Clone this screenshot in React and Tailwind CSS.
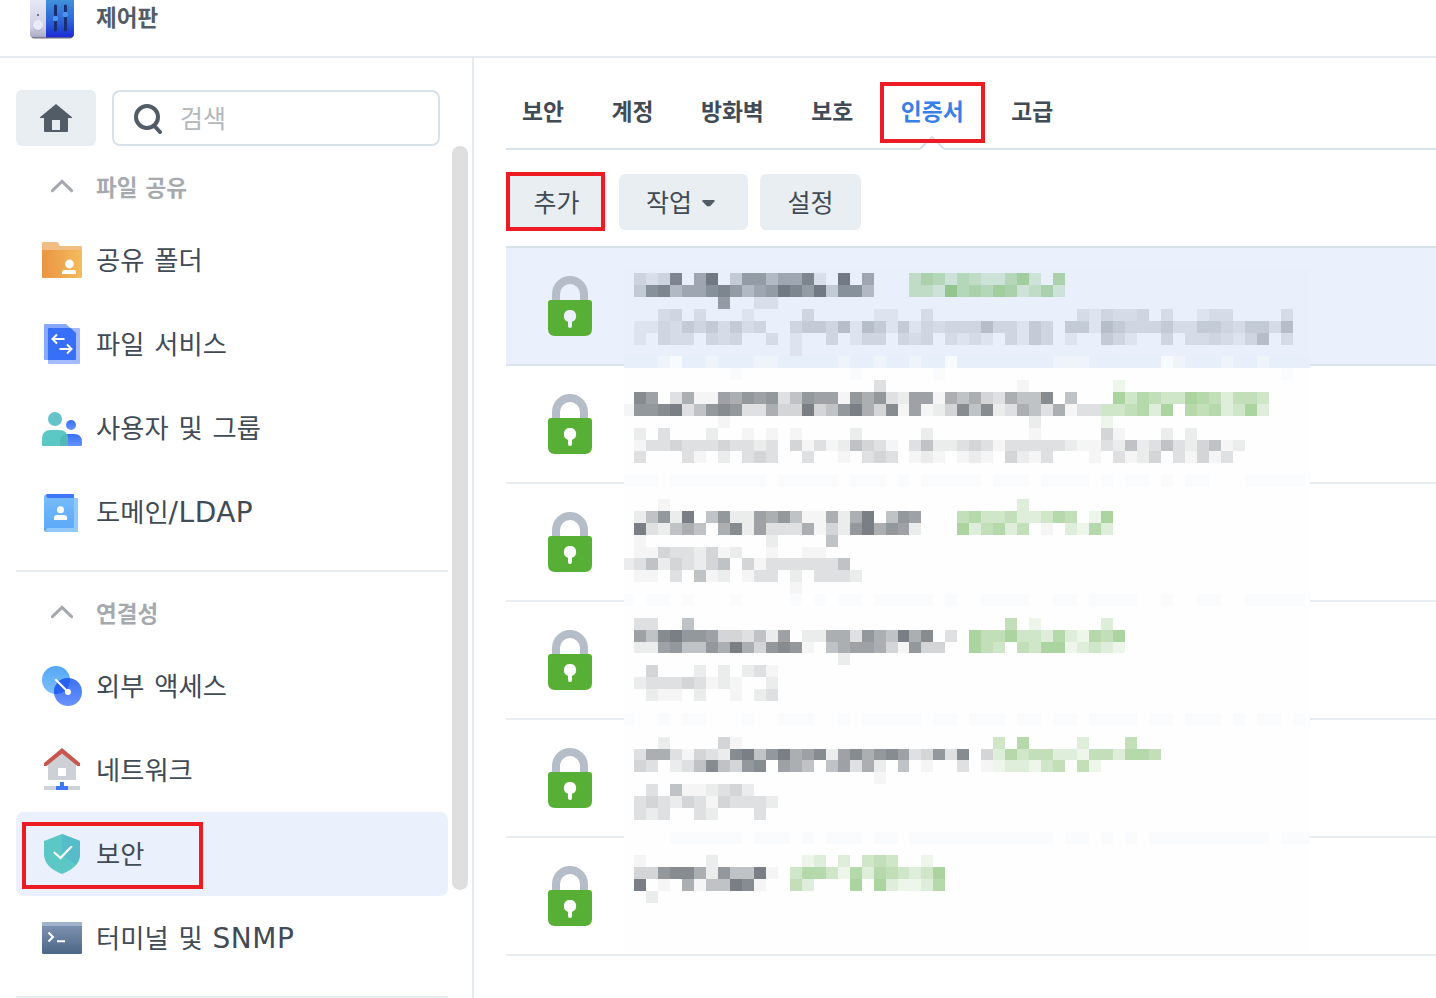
import React from "react";

const KR = "font-['Noto_Sans_CJK_KR',sans-serif]";

/* ---------- icons ---------- */

function ControlPanelLogo() {
  return (
    <svg width="48" height="42" viewBox="28 0 48 42">
      <defs>
        <linearGradient id="cpL" x1="0" y1="0" x2="0" y2="1">
          <stop offset="0" stopColor="#e8e9f8" />
          <stop offset="0.75" stopColor="#cfcfe6" />
          <stop offset="1" stopColor="#a9a8c4" />
        </linearGradient>
        <linearGradient id="cpR" x1="0" y1="0" x2="0" y2="1">
          <stop offset="0" stopColor="#4496dc" />
          <stop offset="0.6" stopColor="#2c62d8" />
          <stop offset="1" stopColor="#1b2bd6" />
        </linearGradient>
      </defs>
      <path d="M31 30H73V35Q73 38.600 70 38.600H34Q31 38.600 31 35Z" fill="#4a4a5c" opacity="0.8" />
      <path d="M30 -2H46V37.300H33Q30 37.300 30 34.300Z" fill="url(#cpL)" />
      <path d="M46 -2H74V34.300Q74 37.300 71 37.300H46Z" fill="url(#cpR)" />
      <circle cx="38" cy="25.800" r="5.300" fill="#b4b4c8" />
      <circle cx="38" cy="25" r="5.100" fill="#e9e9f7" />
      <rect x="37" y="14" width="2" height="2" fill="#77778c" />
      <path d="M55.500 6V30M65.500 6V30" stroke="#16306f" strokeWidth="3" strokeLinecap="round" />
      <circle cx="55.500" cy="18.500" r="2.700" fill="#4a95ee" />
      <circle cx="65.500" cy="14.500" r="2.700" fill="#4a95ee" />
    </svg>
  );
}

function HomeIcon() {
  return (
    <svg width="32" height="28" viewBox="0 0 32 28" fill="#525c66">
      <path fillRule="evenodd" d="M16 0L32 13.200V14H28V27Q28 28 27 28H5Q4 28 4 27V14H0V13.200ZM12 16V26H20V16Z" />
    </svg>
  );
}

function SearchIcon() {
  return (
    <svg width="28" height="30" viewBox="0 0 28 30" fill="none" stroke="#525c66" strokeWidth="4" className="mt-0.5">
      <circle cx="13" cy="13" r="11" />
      <path d="M20.500 22L26 28" strokeLinecap="round" />
    </svg>
  );
}

function ChevronUp() {
  return (
    <svg width="24" height="14" viewBox="0 0 24 14" fill="none">
      <path d="M2.400 11.600L12 2.400L21.600 11.600" stroke="#a5a9ae" strokeWidth="3" strokeLinecap="round" />
    </svg>
  );
}

function Glyph({ children }) {
  return (
    <svg width="40" height="48" viewBox="0 0 40 48" className="shrink-0">
      {children}
    </svg>
  );
}

const SharedFolderIcon = () => (
  <Glyph>
    <linearGradient id="fo">
      <stop offset="0" stopColor="#ea9442" />
      <stop offset="1" stopColor="#f4bc5c" />
    </linearGradient>
    <path d="M1 6H15Q16 6 18 10H39Q40 10 40 11V16H0V7Q0 6 1 6Z" fill="#f2bd85" />
    <path d="M0 14H40V41Q40 42 39 42H1Q0 42 0 41Z" fill="url(#fo)" />
    <circle cx="27.500" cy="22" r="4.400" fill="#fff" />
    <path d="M20 32V30.500Q20 28 22.500 28H31.500Q34 28 34 30.500V32Z" fill="#fff" transform="translate(0 0)" />
  </Glyph>
);

const SharedFolder = () => (
  <Glyph>
    <linearGradient id="fs">
      <stop offset="0" stopColor="#ea9442" />
      <stop offset="1" stopColor="#f4bc5c" />
    </linearGradient>
    <path d="M1 6H15Q16 6 18 10H39Q40 10 40 11V16H0V7Q0 6 1 6Z" fill="#f2bd85" />
    <path d="M0 14H40V41Q40 42 39 42H1Q0 42 0 41Z" fill="url(#fs)" />
    <circle cx="27.500" cy="28" r="4.400" fill="#fff" />
    <path d="M20 38V36.500Q20 34 22.500 34H31.500Q34 34 34 36.500V38Z" fill="#fff" />
  </Glyph>
);

const FileServiceIcon = () => (
  <Glyph>
    <path d="M6 9Q6 8 7 8H37Q38 8 38 9V43Q38 44 37 44H7Q6 44 6 43Z" fill="#a3bbfd" />
    <path d="M2 5Q2 4 3 4H24L34 13V40H3Q2 40 2 39Z" fill="#86a9fb" />
    <path d="M6 8H28.500L34 13V39Q34 40 33 40H6Z" fill="#386ff8" />
    <path d="M22.500 19H10.800M15 14.500L10.500 19L15 23.500M17.500 29H29.200M25 24.500L29.500 29L25 33.500" fill="none" stroke="#fff" strokeWidth="2" />
  </Glyph>
);

const UsersIcon = () => (
  <Glyph>
    <linearGradient id="us" x1="0" y1="0" x2="0" y2="1">
      <stop offset="0" stopColor="#3570f5" />
      <stop offset="1" stopColor="#6792fb" />
    </linearGradient>
    <circle cx="29" cy="21" r="5" fill="url(#us)" />
    <path d="M18 42V38Q18 30 26 30H32Q40 30 40 38V41Q40 42 39 42Z" fill="url(#us)" />
    <circle cx="13" cy="15" r="7" fill="#66c3cb" />
    <path d="M0 41V35Q0 26 9 26H17Q26 26 26 35V42H1Q0 42 0 41Z" fill="#5cc8c6" />
    <path d="M18 42V38Q18 31 24.800 30Q26 32 26 35V42Z" fill="#52b7b8" />
  </Glyph>
);

const LdapIcon = () => (
  <Glyph>
    <linearGradient id="ld" x1="0" y1="0" x2="0" y2="1">
      <stop offset="0" stopColor="#7abcfa" />
      <stop offset="1" stopColor="#58a9f8" />
    </linearGradient>
    <path d="M30 10H35Q36 10 36 11V43Q36 44 35 44H4V40H30Z" fill="#93c8fb" />
    <path d="M4 6Q2 7 2 9V42Q2 43.500 4 44Q4 40 6 40H31Q32 40 32 39V10H4Z" fill="url(#ld)" />
    <path d="M5 6H31Q32 6 32 7V10H5.500Q4 10 4 8Q4 6 5 6Z" fill="#3e78f8" />
    <circle cx="18.500" cy="21.700" r="3.500" fill="#fff" />
    <path d="M12 32V30Q12 27 15 27H22Q25 27 25 30V32Z" fill="#fff" />
  </Glyph>
);

const ExternalAccessIcon = () => (
  <Glyph>
    <defs>
      <linearGradient id="ea" x1="0" y1="0" x2="0" y2="1">
        <stop offset="0" stopColor="#56a8f8" />
        <stop offset="1" stopColor="#7dbefa" />
      </linearGradient>
      <linearGradient id="eb" x1="0" y1="0" x2="0" y2="1">
        <stop offset="0" stopColor="#3a72f6" />
        <stop offset="1" stopColor="#6a92fb" />
      </linearGradient>
      <clipPath id="ec"><circle cx="14" cy="18" r="14" /></clipPath>
    </defs>
    <circle cx="14" cy="18" r="14" fill="url(#ea)" />
    <circle cx="26" cy="30" r="14" fill="url(#eb)" />
    <circle cx="26" cy="30" r="14" fill="#2862f0" clipPath="url(#ec)" />
    <path d="M13.300 17.300L26 30" stroke="#fff" strokeWidth="2" />
    <circle cx="26" cy="30" r="3" fill="#fff" />
  </Glyph>
);

const NetworkIcon = () => (
  <Glyph>
    <path fillRule="evenodd" d="M6 15L20 4L34 15V33Q34 34 33 34H7Q6 34 6 33ZM17 22Q16 22 16 23V30H24V23Q24 22 23 22Z" fill="#cdd0d4" />
    <path d="M20 2L38 17V20H35.500L20 7.500L4.500 20H2V17Z" fill="#c9564e" />
    <path d="M2 40H38V44H2Z" fill="#cfd2d8" />
    <path d="M18 36H22V40H26V44H14V40H18Z" fill="#3f78f6" />
  </Glyph>
);

const ShieldIcon = () => (
  <Glyph>
    <path d="M20 4L38 11V24Q38 37 20 44Q2 37 2 24V11Z" fill="#5cc8c6" />
    <path d="M20 4L38 11V24Q38 30 34 35L20 25Z" fill="#56bcc9" />
    <path d="M12.500 22.700L18.500 28L29.300 16.800" fill="none" stroke="#fff" strokeWidth="2.200" strokeLinecap="round" />
  </Glyph>
);

const TerminalIcon = () => (
  <Glyph>
    <linearGradient id="te" x1="0" y1="0" x2="0" y2="1">
      <stop offset="0" stopColor="#8196b3" />
      <stop offset="1" stopColor="#4e6788" />
    </linearGradient>
    <rect y="8" width="40" height="32" rx="1.200" fill="url(#te)" />
    <path d="M1 8H39Q40 8 40 9V12H0V9Q0 8 1 8Z" fill="#9fb1cb" />
    <path d="M6.500 18.500L11 23L6.500 27.500M15 27.200H23" fill="none" stroke="#fff" strokeWidth="2" />
  </Glyph>
);

function LockIcon({ hole }) {
  return (
    <svg width="44" height="60" viewBox="0 0 44 60">
      <path d="M8 26V18A14 14 0 0 1 36 18V26" fill="none" stroke="#b5bec8" strokeWidth="8" />
      <path d="M3 24H41Q44 24 44 27V53Q44 60 37 60H7Q0 60 0 53V27Q0 24 3 24Z" fill="#57b035" />
      <path d="M22 34A6 6 0 0 1 24 45.700V50A2 2 0 0 1 20 50V45.700A6 6 0 0 1 22 34Z" fill={hole} />
    </svg>
  );
}

/* ---------- pixelated certificate details ---------- */

// [top, height, cells]; the first cell is the narrow column left of the text.
// Digits are shades of gray, a-g shades of green, v/w/W pale traces.
const MOSAIC = [
  [273, 12, ".2128.59.36645581.9.5...cedbdcbbdfb.e"],
  [285, 12, ".37845578645698693774...ccbgdedfebceb"],
  [297, 12, "........6..11"],
  [309, 12, "...23.2...1....3.....11..2............213223.2..122....2"],
  [321, 12, ".11324342423..3443515414132333533143.4415433342244324425"],
  [333, 12, ".1.322.323..2.1..3.133.323.2121.3143.1..431..3.2232135.2"],
  [345, 11, "..............1"],
  [356, 12, "...wW..w...ww.....w..w..w..W........www......Ww...w..w"],
  [368, 12, ".........v.........v......v............................v"],
  [380, 12, ".....................2...........0.......a"],
  [392, 12, ".86.25006576724766075721660545325448.4...fcedccfedbddc"],
  [404, 12, "0778924787225339347953806013848125425022ccdebf.edebcfb"],
  [416, 12, "........0.........................1.....a"],
  [428, 12, ".1.2...1..0.0.0....1.....1........0.....30...1.1"],
  [440, 11, ".022322232212.302014320.2411232022222100214124213401"],
  [451, 12, ".2...20.1.232..2..0.232.010.010.3102...0.2013.20302"],
  [475, 12, "vvv.vvvvvvvv.vvvvv.vvv.v.vvvvv.vvv.vvvv.v.vv.v.vv...vvvvv"],
  [499, 12, "...0.............................b"],
  [511, 12, ".14719.47116574005159.476...deccdbbced.af"],
  [523, 12, ".921454.58162225031795761...fbdebd.0.baeb"],
  [535, 12, ".0..........1....4"],
  [547, 11, ".003221301..0..00"],
  [558, 12, "124132134.302222224"],
  [570, 12, ".00.2.401.022.1.2221"],
  [582, 12, "..............0"],
  [594, 12, "v.vv.v...v....v.v.vv.vvvvv.v..vvvv..vv.vvvv..v..vv..vvvvv"],
  [618, 12, ".22..4..........................d.a.....b"],
  [630, 12, ".6489776332416.11552754958.2.fddfccbebaedf"],
  [642, 11, ".116744759537870.4566530733..fdc.dcffabcba"],
  [653, 12, "..................1"],
  [665, 12, "..3...1.1.120"],
  [677, 12, ".122232010..1"],
  [689, 12, "..100.1..0.12"],
  [713, 12, "v..v.vv...v..vvv..v.vvvvv.vv.vvv.vv.vv.vvvv.vv.vvv.v.vv.v"],
  [737, 12, "...1....30.....................c.e....b...d"],
  [749, 11, ".2552032189479568168578623728.3becddbbaddbeed"],
  [760, 12, ".32.12484378.654.46251.4.0..2.0abbacd.da"],
  [772, 12, ".....................0"],
  [784, 12, "..2.4001231"],
  [796, 12, ".232132032221"],
  [808, 12, ".212..21...2"],
  [832, 12, "....vvvvvv.vvv.v.vvv.vv.vvvvvvvvvvvv.vv.v.v.vvvvvvvvvv.vvv"],
  [855, 12, ".0.....1.......ab.b.cdc..a"],
  [867, 12, ".337885174490.ceecaebedcbcf"],
  [879, 12, ".9.0.5044980..db...f.fbaabe"],
  [891, 12, "..1"],
];

const GRAY = [0.045, 0.09, 0.15, 0.2, 0.29, 0.39, 0.45, 0.51, 0.57, 0.63];
const GREEN = { a: 0.09, b: 0.18, c: 0.27, d: 0.34, e: 0.41, f: 0.47, g: 0.56 };

function cellColor(ch, y) {
  if (ch >= "0" && ch <= "9") {
    const soft = y > 300 && y < 356 ? 0.68 : 1;
    return `rgba(42,52,60,${GRAY[Number(ch)] * soft})`;
  }
  if (GREEN[ch]) return `rgba(80,165,55,${GREEN[ch]})`;
  if (ch === "v") return "#fafbfd";
  if (ch === "w") return "rgba(250,253,250,0.4)";
  if (ch === "W") return "rgba(253,255,253,0.75)";
  return null;
}

function edge(i) {
  if (i === 0) return 624;
  const k = i - 1;
  return k < 23 ? 634 + 12 * k : 633 + 12 * k;
}

function Redaction() {
  return (
    <svg
      width="686"
      height="684"
      viewBox="624 268 686 684"
      shapeRendering="crispEdges"
      className="pointer-events-none absolute top-[20px] left-[118px]"
    >
      <rect x="624" y="268" width="686" height="684" fill="#fefefe" />
      <rect x="624" y="268" width="686" height="100" fill="#e9f0fc" />
      <rect x="624" y="356" width="686" height="12" fill="#e7effb" />
      {MOSAIC.map(([y, h, cells]) =>
        cells.split("").map((ch, i) => {
          const fill = cellColor(ch, y);
          if (!fill) return null;
          return <rect key={`${y}-${i}`} x={edge(i)} y={y} width={edge(i + 1) - edge(i)} height={h} fill={fill} />;
        })
      )}
    </svg>
  );
}

/* ---------- sidebar ---------- */

function SectionTitle({ children }) {
  return (
    <div className="flex h-16 items-center pl-[34px]">
      <ChevronUp />
      <span className="ml-[22px] pb-px text-[22.5px] leading-8 font-bold text-[#a6aaaf] [word-spacing:3px]">{children}</span>
    </div>
  );
}

function NavItem({ icon, children, active }) {
  return (
    <div
      className={
        active
          ? "relative flex h-[84px] items-center rounded-lg bg-[#eaf1fc] pl-[26px]"
          : "relative flex h-[84px] items-center pl-[26px]"
      }
    >
      {icon}
      <span className="ml-[14px] pb-0.5 text-[26.300px] leading-9 whitespace-nowrap text-[#414b55] [word-spacing:4px]">{children}</span>
      {active && <div className="absolute top-[10px] left-[6px] h-[67px] w-[181px] border-4 border-[#ed1c24]" />}
    </div>
  );
}

function Latin({ children }) {
  return (
    <span className="font-['DejaVu_Sans',sans-serif] text-[28px] leading-8 tracking-[0.500px]">{children}</span>
  );
}

function Sidebar() {
  return (
    <aside className="relative w-[474px] shrink-0 border-r-2 border-[#e6ebf0] pl-4">
      <div className="flex gap-4 pt-8">
        <button className="flex h-14 w-20 items-center justify-center rounded-md bg-[#e9eef2]">
          <HomeIcon />
        </button>
        <div className="flex h-14 w-[328px] items-center rounded-lg border-2 border-[#d8e0ea] pl-5">
          <SearchIcon />
          <span className="ml-[18px] pb-0.5 text-[25px] leading-9 text-[#b3b7bb]">검색</span>
        </div>
      </div>
      <nav className="w-[432px] pt-2">
        <SectionTitle>파일 공유</SectionTitle>
        <NavItem icon={<SharedFolder />}>공유 폴더</NavItem>
        <NavItem icon={<FileServiceIcon />}>파일 서비스</NavItem>
        <NavItem icon={<UsersIcon />}>사용자 및 그룹</NavItem>
        <NavItem icon={<LdapIcon />}>도메인<Latin>/LDAP</Latin></NavItem>
        <div className="mt-4 mb-2 h-0.5 bg-[#e8edf2]" />
        <SectionTitle>연결성</SectionTitle>
        <NavItem icon={<ExternalAccessIcon />}>외부 액세스</NavItem>
        <NavItem icon={<NetworkIcon />}>네트워크</NavItem>
        <NavItem icon={<ShieldIcon />} active>보안</NavItem>
        <NavItem icon={<TerminalIcon />}>터미널 및 <Latin>SNMP</Latin></NavItem>
        <div className="mt-4 h-0.5 bg-[#e8edf2]" />
      </nav>
      <div className="absolute top-[88px] right-1 h-[744px] w-4 rounded-full bg-[#dfdfdf]" />
    </aside>
  );
}

/* ---------- main area ---------- */

function Tab({ children, active }) {
  return (
    <div
      className={
        active
          ? "relative flex h-[90px] items-center pt-[15px] text-[#3880e8]"
          : "flex h-[90px] items-center pt-[15px]"
      }
    >
      {children}
      {active && (
        <>
          <svg width="26" height="16" viewBox="0 0 26 16" className="absolute bottom-[-2px] left-[18px]">
            <path d="M1 16V14L13 2L25 14V16Z" fill="#fff" />
            <path d="M1 15L13 3L25 15" fill="none" stroke="#d8e0ea" strokeWidth="2" />
          </svg>
          <div className="absolute top-[24px] left-[-21px] h-[61px] w-[105px] border-4 border-[#ed1c24]" />
        </>
      )}
    </div>
  );
}

function Main() {
  return (
    <main className="min-w-0 flex-1 pl-8">
      <div className="flex h-[92px] gap-[47.500px] border-b-2 border-[#d8e0ea] pl-4 text-[22.800px] leading-8 font-bold whitespace-nowrap text-[#414b55]">
        <Tab>보안</Tab>
        <Tab>계정</Tab>
        <Tab>방화벽</Tab>
        <Tab>보호</Tab>
        <Tab active>인증서</Tab>
        <Tab>고급</Tab>
      </div>
      <div className="flex gap-3 pt-6 pb-4 text-[25px] text-[#414b55]">
        <button className="relative flex h-14 w-[101px] items-center justify-center rounded-md bg-[#e9eef2]">
          추가
          <div className="absolute top-[-2px] left-0 h-[59px] w-[99px] border-4 border-[#ed1c24]" />
        </button>
        <button className="flex h-14 w-[129px] items-center rounded-md bg-[#e9eef2] pl-[27px]">
          작업
          <svg width="13" height="7" viewBox="0 0 13 7" className="mt-0.5 ml-[10px]">
            <path d="M0.500 0H12.500V1.500L8 6.300H5L0.500 1.500Z" fill="#525c66" />
          </svg>
        </button>
        <button className="flex h-14 w-[101px] items-center justify-center rounded-md bg-[#e9eef2]">설정</button>
      </div>
      <div className="relative border-t-2 border-[#d8e0e8]">
        <div className="h-[118px] border-b-2 border-[#d9e4ee] bg-[#eaf1fc] pt-7 pl-[42px]">
          <LockIcon hole="#eaf1fc" />
        </div>
        {[1, 2, 3, 4, 5].map((n) => (
          <div key={n} className="h-[118px] border-b-2 border-[#e8edf2] pt-7 pl-[42px]">
            <LockIcon hole="#fff" />
          </div>
        ))}
        <Redaction />
      </div>
    </main>
  );
}

export default function App() {
  return (
    <div className={`flex h-[998px] w-[1436px] flex-col overflow-hidden bg-white ${KR}`}>
      <header className="flex h-[58px] shrink-0 items-start border-b-2 border-[#e6ebf0] pl-7">
        <ControlPanelLogo />
        <span className="ml-5 text-[22.5px] leading-8 font-bold text-[#525c66]">제어판</span>
      </header>
      <div className="flex min-h-0 flex-1">
        <Sidebar />
        <Main />
      </div>
    </div>
  );
}
